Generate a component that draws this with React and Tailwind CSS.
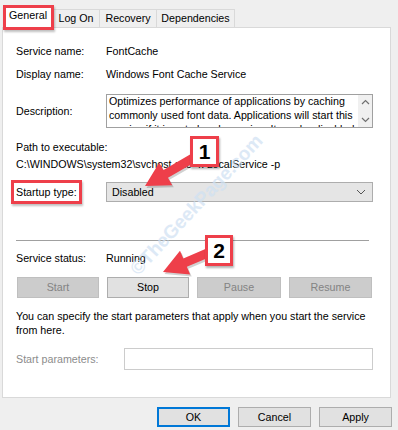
import React from "react";

function Arrow({ tip, tail, hl = 24, hw = 13, sw = 4.5 }) {
  const dx = tail[0] - tip[0];
  const dy = tail[1] - tip[1];
  const len = Math.hypot(dx, dy);
  const ux = dx / len, uy = dy / len;
  const px = -uy, py = ux;
  const b = [tip[0] + ux * hl, tip[1] + uy * hl];
  const pts = [
    tip,
    [b[0] + px * hw, b[1] + py * hw],
    [b[0] + px * sw, b[1] + py * sw],
    [tail[0] + px * sw, tail[1] + py * sw],
    [tail[0] - px * sw, tail[1] - py * sw],
    [b[0] - px * sw, b[1] - py * sw],
    [b[0] - px * hw, b[1] - py * hw],
  ];
  const s = pts.map((p) => p.join(",")).join(" ");
  const sh = pts.map((p) => `${p[0] + 1.5},${p[1] + 2}`).join(" ");
  return (
    <>
      <polygon points={sh} fill="rgba(0,0,0,0.18)" />
      <polygon points={s} fill="#ee3f4a" />
    </>
  );
}

function Btn({ children, disabled, className = "" }) {
  return (
    <div
      className={
        "h-[21px] flex items-center justify-center border " +
        (disabled
          ? "bg-[#cccccc] border-[#bfbfbf] text-[#838383] "
          : "bg-[#e1e1e1] border-[#adadad] text-black ") +
        className
      }
    >
      {children}
    </div>
  );
}

export default function App() {
  return (
    <div className="relative w-[398px] h-[430px] bg-[#efefef] overflow-hidden text-[10.7px] text-black font-['Liberation_Sans',Arial,sans-serif]">
      {/* Tabs */}
      <div className="flex pl-[3px] pt-[5px] h-[27px] items-end">
        <div className="relative h-[22px] w-[50px] bg-white border-t border-l border-r border-[#d9d9d9] flex items-center justify-center z-10">
          <span className="-mt-[2px]">General</span>
          <div className="absolute -left-[1px] -top-[1px] w-[51px] h-[25px] border-[3px] border-[#ee3f4a] shadow-[1px_2px_2px_rgba(0,0,0,0.25)]" />
        </div>
        <div className="h-[18px] w-[47px] border-t border-r border-[#d9d9d9] flex items-center justify-center">Log On</div>
        <div className="h-[18px] w-[57px] border-t border-r border-[#d9d9d9] flex items-center justify-center">Recovery</div>
        <div className="h-[18px] w-[78px] border-t border-r border-[#d9d9d9] flex items-center justify-center">Dependencies</div>
      </div>

      {/* Panel */}
      <div className="ml-[2px] w-[389px] h-[371px] bg-white border border-[#d9d9d9] pl-[13px] pr-[17px] pt-[15px]">
        <div className="flex h-[16px] items-center">
          <div className="w-[90px]">Service name:</div>
          <div>FontCache</div>
        </div>
        <div className="flex h-[16px] items-center mt-[7px]">
          <div className="w-[90px]">Display name:</div>
          <div>Windows Font Cache Service</div>
        </div>
        <div className="flex mt-[12px]">
          <div className="w-[90px] h-[34px] flex items-center pt-[1px]">Description:</div>
          <div className="w-[267px] h-[34px] border border-[#a0a0a0] overflow-hidden flex">
            <div className="flex-1 pl-[2px] leading-[14px] -mt-[1px]">
              Optimizes performance of applications by caching commonly used font data. Applications will start this service if it is not already running. It can be disabled
            </div>
            <div className="w-[14px] bg-[#f0f0f0] flex flex-col items-center justify-between py-[4px]">
              <svg width="9" height="6" viewBox="0 0 9 6"><path d="M1 5 L4.5 1.5 L8 5" stroke="#707070" strokeWidth="1.2" fill="none" /></svg>
              <svg width="9" height="6" viewBox="0 0 9 6"><path d="M1 1 L4.5 4.5 L8 1" stroke="#707070" strokeWidth="1.2" fill="none" /></svg>
            </div>
          </div>
        </div>
        <div className="h-[16px] flex items-center mt-[11px]">Path to executable:</div>
        <div className="h-[16px] flex items-center mt-[1px]">C:\WINDOWS\system32\svchost.exe -k LocalService -p</div>
        <div className="flex mt-[10px] items-center">
          <div className="w-[90px] h-[20px] flex items-center">
            <div className="relative -ml-[4px] pl-[4px] h-[20px] w-[68px] flex items-center">
              Startup type:
              <div className="absolute -left-[1px] -top-[2px] w-[71px] h-[24px] border-[3px] border-[#ee3f4a] shadow-[1px_2px_2px_rgba(0,0,0,0.25)]" />
            </div>
          </div>
          <div className="w-[267px] h-[20px] bg-[#e5e5e5] border border-[#adadad] flex items-center justify-between pl-[5px] pr-[6px]">
            <span>Disabled</span>
            <svg width="10" height="6" viewBox="0 0 10 6"><path d="M1 1 L5 5 L9 1" stroke="#555" strokeWidth="1" fill="none" /></svg>
          </div>
        </div>
        <div className="mt-[38px] w-[353px] h-[1px] bg-[#a0a0a0]" />
        <div className="flex h-[16px] items-center mt-[9px]">
          <div className="w-[90px]">Service status:</div>
          <div>Running</div>
        </div>
        <div className="flex mt-[11px] gap-[8px] pl-[1px]">
          <Btn disabled className="w-[82px]">Start</Btn>
          <Btn className="w-[82px]">Stop</Btn>
          <Btn disabled className="w-[84px]">Pause</Btn>
          <Btn disabled className="w-[83px]">Resume</Btn>
        </div>
        <div className="mt-[11px] leading-[14px]">
          You can specify the start parameters that apply when you start the service
          <br />
          from here.
        </div>
        <div className="flex mt-[11px] items-center">
          <div className="w-[108px] text-[#8c8c8c]">Start parameters:</div>
          <div className="w-[249px] h-[22px] border border-[#cccccc] bg-white" />
        </div>
      </div>

      {/* Bottom buttons */}
      <div className="flex justify-end gap-[8px] pr-[6px] mt-[9px]">
        <div className="w-[73px] h-[20px] border-2 border-[#0078d7] bg-[#e1e1e1] flex items-center justify-center">OK</div>
        <div className="w-[73px] h-[20px] border border-[#adadad] bg-[#e1e1e1] flex items-center justify-center">Cancel</div>
        <div className="w-[73px] h-[20px] border border-[#adadad] bg-[#e1e1e1] flex items-center justify-center">Apply</div>
      </div>

      {/* Watermark */}
      <div className="absolute left-[134px] top-[258px] text-[19px] font-bold text-[#cfe1f3] opacity-70 pointer-events-none whitespace-nowrap origin-left rotate-[-47deg]">
        ©TheGeekPage.com
      </div>

      {/* Arrows */}
      <svg className="absolute left-0 top-0 pointer-events-none" width="398" height="430">
        <Arrow tip={[145, 186]} tail={[200, 154]} />
        <Arrow tip={[163, 272]} tail={[210, 252]} />
      </svg>

      {/* Badges */}
      <div className="absolute left-[190px] top-[136px] w-[29px] h-[31px] bg-white border-[3px] border-[#ee3f4a] flex items-center justify-center text-[21px] font-bold shadow-[1px_2px_2px_rgba(0,0,0,0.3)]">1</div>
      <div className="absolute left-[205px] top-[235px] w-[28px] h-[31px] bg-white border-[3px] border-[#ee3f4a] flex items-center justify-center text-[21px] font-bold shadow-[1px_2px_2px_rgba(0,0,0,0.3)]">2</div>
    </div>
  );
}
